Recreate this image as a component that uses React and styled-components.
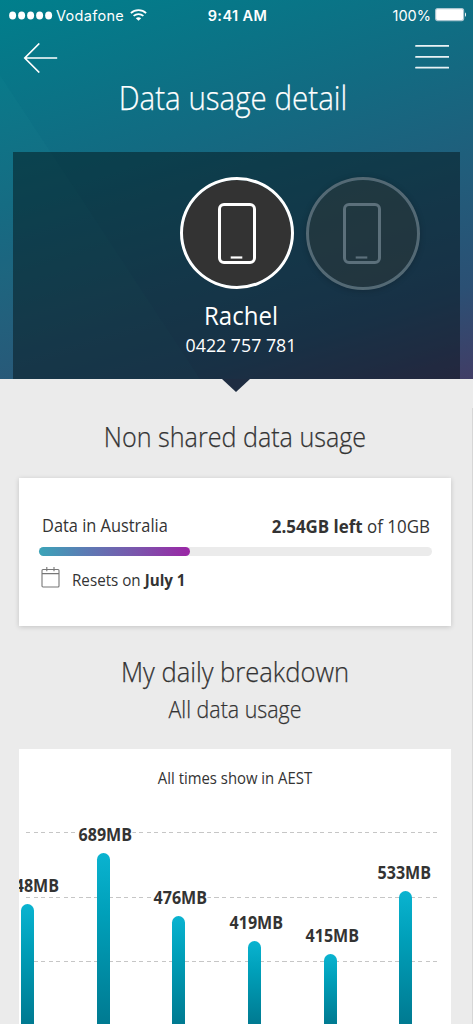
// 3rd-party imports

import React from "react";
import styled, { createGlobalStyle } from "styled-components";

// data

const DAYS = [
  { label: "548MB", top: 154.5, shift: 5 },
  { label: "689MB", top: 104, shift: 1.5 },
  { label: "476MB", top: 167, shift: 1.5 },
  { label: "419MB", top: 192, shift: 1.5 },
  { label: "415MB", top: 204.5, shift: 2.5 },
  { label: "533MB", top: 142, shift: -1 }
];

const GRID_LINES = [83, 148, 212];

// components

const GlobalStyle = createGlobalStyle`
  * {
    box-sizing: border-box;
  }

  body {
    margin: 0;
    overflow: hidden;
    background: #ebebeb;
    color: #333;
    font-family: "Open Sans", "Noto Sans", sans-serif;
  }
`;

const Screen = styled.div`
  position: relative;
  width: 473px;
  height: 1024px;
  overflow: hidden;
`;

/* the brand face is narrower than Open Sans, so every line is condensed */
const Text = styled.div`
  margin: 0;
  font-size: ${({ size }) => size}px;
  line-height: ${({ line }) => line}px;
  font-weight: ${({ weight }) => weight || 400};
  text-align: ${({ align }) => align || "center"};
  transform: scaleX(${({ narrow }) => narrow || 0.9});
  transform-origin: ${({ align }) => align || "center"};
  white-space: nowrap;

  b {
    font-weight: 700;
  }
`;

const Title = styled(Text)`
  padding-right: 8px;
  -webkit-text-stroke: 0.25px;
`;

const SectionTitle = styled(Text)`
  padding-top: ${({ space }) => space}px;
  -webkit-text-stroke: 0.25px;
`;

const Header = styled.header`
  position: relative;
  height: 379px;
  color: #fff;
  background: linear-gradient(
    163deg,
    #007f8c 0%,
    #126b82 36%,
    #215d7b 60%,
    #2b5074 82%,
    #413d66 100%
  );

  &::before {
    content: "";
    position: absolute;
    inset: 0;
    background: rgba(60, 170, 170, 0.05);
    clip-path: polygon(0 75px, 200px 100%, 0 100%);
  }
`;

const StatusBar = styled.div`
  display: grid;
  grid-template-columns: 1fr auto 1fr;
  align-items: center;
  height: 30px;
  padding: 0 6px 0 9px;
  font-family: Inter, sans-serif;
  font-size: 14.5px;
`;

const StatusGroup = styled.div`
  display: flex;
  align-items: center;
  justify-content: ${({ end }) => (end ? "flex-end" : "flex-start")};
  gap: 4px;
`;

const Carrier = styled.span`
  margin: 0 2px 0 -1px;
  letter-spacing: 0.3px;
`;

const Clock = styled.div`
  padding-right: 1px;
  letter-spacing: 0.4px;
  font-weight: 600;
`;

const Nav = styled.nav`
  display: flex;
  justify-content: space-between;
  height: 47px;
  padding: 13px 24px 0 23px;
`;

const Panel = styled.section`
  position: relative;
  height: 227px;
  margin: 33px 13px 0;
  padding-top: 25px;
  background: rgba(3, 12, 16, 0.46);
`;

const Devices = styled.div`
  display: flex;
  gap: 12px;
  height: 121px;
  padding-left: 167px;
`;

const Device = styled.div`
  display: flex;
  align-items: center;
  justify-content: center;
  width: 114px;
  height: ${({ active }) => (active ? 112 : 113)}px;
  padding-right: ${({ active }) => (active ? 0 : 2)}px;
  border: 3px solid ${({ active }) => (active ? "#fff" : "#546974")};
  border-radius: 50%;
  background: ${({ active }) => (active ? "#333" : "rgba(45, 55, 55, 0.5)")};
  background-clip: padding-box;
  color: ${({ active }) => (active ? "#fff" : "#5c707b")};
  box-shadow: ${({ active }) => (active ? "none" : "0 1px 6px rgba(0, 0, 0, 0.2)")};
`;

const Contact = styled.div`
  padding-left: 9px;
`;

const Notch = styled.div`
  position: absolute;
  z-index: 1;
  top: 100%;
  left: 209px;
  width: 28px;
  height: 13px;
  background: #1e2c41;
  clip-path: polygon(0 0, 100% 0, 50% 100%);
`;

const Content = styled.main`
  padding: 0 22px 0 19px;
`;

const UsageCard = styled.section`
  height: 148px;
  margin-top: 22px;
  padding: 34px 19px 0 20px;
  background: #fff;
  box-shadow: 0 1px 5px rgba(0, 0, 0, 0.17);
`;

const UsageRow = styled.div`
  display: flex;
  justify-content: space-between;
  padding: 0 2px 0 3px;
`;

const Track = styled.div`
  height: 9px;
  margin-top: 7px;
  border-radius: 5px;
  background: #ebebeb;
`;

const Fill = styled.div`
  height: 100%;
  border-radius: 5px;
  background: linear-gradient(90deg, #3ba4b8, #5b7cb4 30%, #7b55ac 65%, #9b26a5);
`;

const ResetRow = styled.div`
  display: flex;
  gap: 12px;
  margin-top: 11px;
  padding-left: 2px;
`;

const ChartCard = styled.section`
  position: relative;
  height: 275px;
  margin-top: 23px;
  padding-top: 17px;
  overflow: hidden;
  background: #fff;
`;

const GridLine = styled.div`
  position: absolute;
  top: ${({ top }) => top}px;
  left: 7px;
  width: 412px;
  height: 1.3px;
  background: repeating-linear-gradient(90deg, #c6c6c6 0 4.2px, transparent 4.2px 7.54px);
`;

const Bars = styled.div`
  position: absolute;
  inset: 0 auto 0 -29px;
  display: grid;
  grid-template-columns: repeat(6, 75.6px);
`;

const Day = styled.div`
  display: flex;
  flex-direction: column;
  align-items: center;
`;

const DayLabel = styled(Text)`
  position: relative;
  left: ${({ shift }) => shift}px;
  height: 14px;
  margin-bottom: 11px;
  background: #fff;
`;

const Bar = styled.div`
  flex: 1;
  width: 13px;
  border-radius: 6.5px 6.5px 0 0;
  background: linear-gradient(#0ab3d0, #00a0ba 35%, #007a91);
`;

const ScrollEdge = styled.div`
  position: absolute;
  top: 408px;
  right: 0;
  bottom: 0;
  width: 1.5px;
  background: #d6d6d6;
`;

// icons

const WifiIcon = () => (
  <svg width="17" height="12" viewBox="0 0 17 12" fill="none" stroke="#fff" strokeWidth="1.8">
    <path d="M.9 4.1C5 .2 12 .2 16.1 4.1" />
    <path d="M3.6 6.9c2.8-2.5 7-2.5 9.8 0" />
    <path d="M8.5 11.8 5.8 9.2c1.5-1.4 3.9-1.4 5.4 0z" fill="#fff" stroke="none" />
  </svg>
);

const SignalIcon = () => (
  <svg width="44" height="9" viewBox="0 0 44 9" fill="#fff">
    {[3.6, 12.6, 21.6, 30.6, 39.6].map(x => (
      <ellipse key={x} cx={x} cy="4.5" rx="3.5" ry="3.9" />
    ))}
  </svg>
);

const BatteryIcon = () => (
  <svg width="32" height="14" viewBox="0 0 32 14">
    <rect x=".6" y=".6" width="28" height="12" rx="2" fill="#fff" stroke="#a9c5d0" strokeWidth="1.2" />
    <path d="M30 4.5c1.3.5 1.3 3.8 0 4.3z" fill="#fff" />
  </svg>
);

const BackIcon = () => (
  <svg width="35" height="30" viewBox="0 0 35 30" fill="none" stroke="#fff" strokeWidth="1.7">
    <path d="M16.3.5 1.8 15l14.5 14.5M1.8 15h32.4" />
  </svg>
);

const MenuIcon = () => (
  <svg width="34" height="27" viewBox="0 0 34 27" stroke="#e9f2f5" strokeWidth="1.8">
    <path d="M1 2.9h32.5M1 13.9h32.5M1 24.7h32.5" strokeLinecap="round" />
  </svg>
);

const PhoneIcon = () => (
  <svg width="38" height="61" viewBox="0 0 38 61" fill="none" stroke="currentColor">
    <rect x="1.5" y="1.5" width="35" height="58" rx="4.5" strokeWidth="3" />
    <path d="M12.7 54.5h11.6" strokeWidth="2.2" />
  </svg>
);

const CalendarIcon = () => (
  <svg width="19" height="21" viewBox="0 0 19 21" fill="none" stroke="#777" strokeWidth="1.1">
    <rect x="1" y="2.5" width="17" height="17.5" rx="1" />
    <path d="M1 6.6h17M5.8 0v4.2M13 0v4.2" />
  </svg>
);

// page

const App = () => {
  return (
    <Screen>
      <GlobalStyle />

      <Header>
        <StatusBar>
          <StatusGroup>
            <SignalIcon />
            <Carrier>Vodafone</Carrier>
            <WifiIcon />
          </StatusGroup>
          <Clock>9:41 AM</Clock>
          <StatusGroup end>
            <span>100%</span>
            <BatteryIcon />
          </StatusGroup>
        </StatusBar>

        <Nav>
          <BackIcon />
          <MenuIcon />
        </Nav>
        <Title as="h1" size={33} line={42} weight={300} narrow={0.895}>
          Data usage detail
        </Title>

        <Panel>
          <Devices>
            <Device active>
              <PhoneIcon />
            </Device>
            <Device>
              <PhoneIcon />
            </Device>
          </Devices>
          <Contact>
            <Text size={25} line={34} narrow={0.96}>
              Rachel
            </Text>
            <Text size={18.5} line={26} narrow={0.96}>
              0422 757 781
            </Text>
          </Contact>
          <Notch />
        </Panel>
      </Header>

      <Content>
        <SectionTitle as="h2" size={28} line={40} weight={300} narrow={0.897} space={37}>
          Non shared data usage
        </SectionTitle>
        <UsageCard>
          <UsageRow>
            <Text size={18.5} line={26} align="left" narrow={0.885}>
              Data in Australia
            </Text>
            <Text size={18.5} line={28} align="right" narrow={0.915}>
              <b>2.54GB left</b> of 10GB
            </Text>
          </UsageRow>
          <Track>
            <Fill style={{ width: "38.5%" }} />
          </Track>
          <ResetRow>
            <CalendarIcon />
            <Text size={16.5} line={26} align="left" narrow={0.92}>
              Resets on <b>July 1</b>
            </Text>
          </ResetRow>
        </UsageCard>

        <SectionTitle as="h2" size={28} line={40} weight={300} narrow={0.913} space={25}>
          My daily breakdown
        </SectionTitle>
        <SectionTitle as="h3" size={23.5} line={33} weight={300} narrow={0.91} space={2}>
          All data usage
        </SectionTitle>

        <ChartCard>
          <Text size={16} line={24} narrow={0.93}>
            All times show in AEST
          </Text>
          {GRID_LINES.map(top => (
            <GridLine key={top} top={top} />
          ))}
          <Bars>
            {DAYS.map(({ label, top, shift }) => (
              <Day key={label} style={{ paddingTop: top - 25 }}>
                <DayLabel size={17} line={14} weight={700} shift={shift} narrow={0.945}>
                  {label}
                </DayLabel>
                <Bar />
              </Day>
            ))}
          </Bars>
        </ChartCard>
      </Content>

      <ScrollEdge />
    </Screen>
  );
};

export default App;
